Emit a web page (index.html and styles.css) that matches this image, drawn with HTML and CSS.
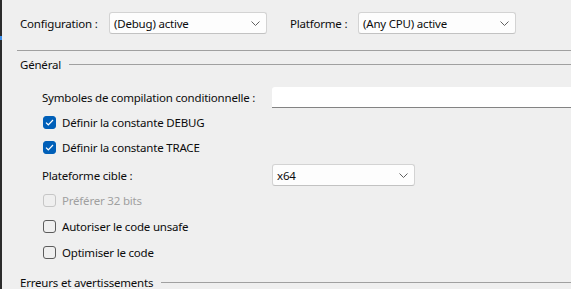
FILE: index.html
```html
<!DOCTYPE html>
<html lang="fr">
<head>
<meta charset="UTF-8">
<title>Build</title>
<link rel="stylesheet" href="styles.css">
</head>
<body>
<div class="strip"><div class="strip-mark"></div></div>

<div class="page">
  <!-- configuration / plateforme -->
  <div class="toolbar">
    <span class="tb-label conf">Configuration :</span>
    <div class="combo wide"><span>(Debug) active</span><svg class="chev" width="9" height="5" viewBox="0 0 9 5"><path d="M0.5 0.5 L4.5 4.5 L8.5 0.5" fill="none" stroke="#606060" stroke-width="1"/></svg></div>
    <span class="tb-label plat">Platforme :</span>
    <div class="combo wide"><span>(Any CPU) active</span><svg class="chev" width="9" height="5" viewBox="0 0 9 5"><path d="M0.5 0.5 L4.5 4.5 L8.5 0.5" fill="none" stroke="#606060" stroke-width="1"/></svg></div>
  </div>
  <div class="rule"></div>

  <div class="section-head"><span>Général</span><div class="head-line"></div></div>

  <div class="options">
    <div class="row symbols">
      <span class="opt-label">Symboles de compilation conditionnelle :</span>
      <div class="textbox"></div>
    </div>
    <div class="row check"><span class="box on"><svg width="9" height="7" viewBox="0 0 9 7"><path d="M1 3.6 L3.3 5.8 L8 1" fill="none" stroke="#fff" stroke-width="1.2"/></svg></span>Définir la constante DEBUG</div>
    <div class="row check"><span class="box on"><svg width="9" height="7" viewBox="0 0 9 7"><path d="M1 3.6 L3.3 5.8 L8 1" fill="none" stroke="#fff" stroke-width="1.2"/></svg></span>Définir la constante TRACE</div>
    <div class="row target">
      <span class="opt-label">Plateforme cible :</span>
      <div class="combo narrow"><span>x64</span><svg class="chev" width="9" height="5" viewBox="0 0 9 5"><path d="M0.5 0.5 L4.5 4.5 L8.5 0.5" fill="none" stroke="#606060" stroke-width="1"/></svg></div>
    </div>
    <div class="row check disabled"><span class="box"></span>Préférer 32 bits</div>
    <div class="row check tall"><span class="box"></span>Autoriser le code unsafe</div>
    <div class="row check tall"><span class="box"></span>Optimiser le code</div>
  </div>

  <div class="section-head last"><span>Erreurs et avertissements</span><div class="head-line"></div></div>
</div>
</body>
</html>
```
FILE: styles.css
```css
html, body {
  margin: 0;
  height: 100%;
}

body {
  display: flex;
  background: #efefef;
  color: #0c0c0c;
  font-family: 'Noto Sans', 'Liberation Sans', sans-serif;
  font-size: 11.5px;
  letter-spacing: -0.2px;
  white-space: nowrap;
  overflow: hidden;
}

.strip {
  width: 2px;
  flex: none;
  background: #2b2b2b;
}

.strip-mark {
  margin-top: 36px;
  height: 4px;
  background: #3b8eea;
}

.page {
  flex: 1;
  padding-left: 18px;
}

/* ligne du haut */
.toolbar {
  display: flex;
  align-items: center;
  margin-top: 12px;
  height: 22px;
}

.tb-label.conf { width: 89px; }
.tb-label.plat { width: 68px; margin-left: 23px; }

.combo {
  box-sizing: border-box;
  height: 22px;
  display: flex;
  align-items: center;
  justify-content: space-between;
  padding: 0 6px 0 4px;
  background: #fdfdfd;
  border: 1px solid #d3d3d3;
  border-bottom-color: #c2c2c2;
  border-radius: 3px;
}

.combo.wide { width: 158px; }
.combo.narrow { width: 143px; }

.rule {
  margin: 16px 0 0 -3px;
  height: 1px;
  background: #a0a0a0;
}

.section-head {
  display: flex;
  align-items: center;
  height: 26px;
}

.head-line {
  flex: 1;
  height: 1px;
  margin-left: 8px;
  background: #a0a0a0;
}

.section-head.last { margin-top: 4px; }

.options {
  padding-left: 22px;
  margin-top: 7px;
}

.row {
  display: flex;
  align-items: center;
  height: 25px;
}

.row.symbols { height: 26px; }
.row.target { height: 26px; margin-top: 2px; }
.row.tall { height: 26px; }

.opt-label { width: 230px; flex: none; }

.textbox {
  flex: 1;
  height: 21px;
  box-sizing: border-box;
  background: #fff;
  border-bottom: 1px solid #838383;
  border-radius: 3px 0 0 0;
  margin-right: -20px;
}

.box {
  box-sizing: border-box;
  width: 13px;
  height: 13px;
  margin: 0 6px 0 1px;
  border: 1px solid #5c5c5c;
  border-radius: 3px;
  display: flex;
  align-items: center;
  justify-content: center;
}

.box.on {
  background: #005fb8;
  border-color: #005fb8;
}

.disabled { color: #a0a0a0; }
.disabled .box { border-color: #c6c6c6; }
```
